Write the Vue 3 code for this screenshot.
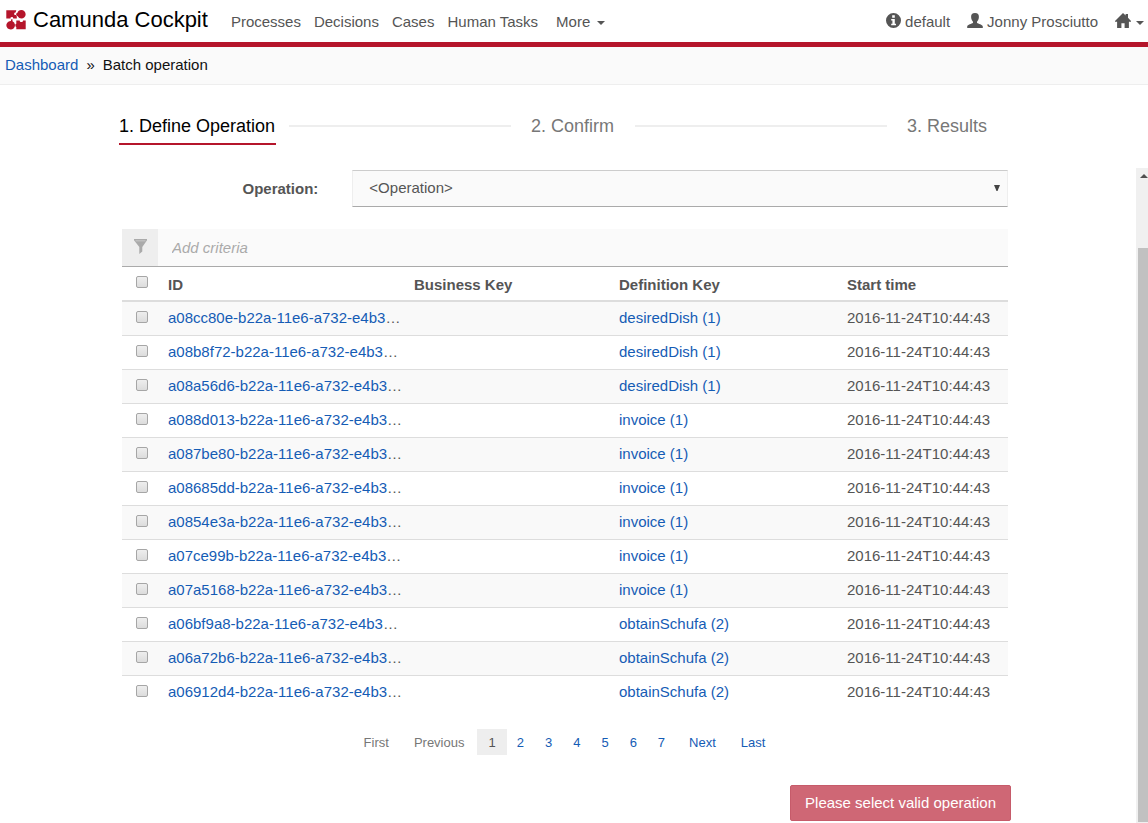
<script setup>
import { ref } from 'vue'

const navLinks = ['Processes', 'Decisions', 'Cases', 'Human Tasks']
const operation = ref('')
const criteria = ref('')
const selected = ref([])
const startTime = '2016-11-24T10:44:43'
const instances = [
  ['a08cc80e-b22a-11e6-a732-e4b3', 'desiredDish (1)'],
  ['a08b8f72-b22a-11e6-a732-e4b3', 'desiredDish (1)'],
  ['a08a56d6-b22a-11e6-a732-e4b3', 'desiredDish (1)'],
  ['a088d013-b22a-11e6-a732-e4b3', 'invoice (1)'],
  ['a087be80-b22a-11e6-a732-e4b3', 'invoice (1)'],
  ['a08685dd-b22a-11e6-a732-e4b3', 'invoice (1)'],
  ['a0854e3a-b22a-11e6-a732-e4b3', 'invoice (1)'],
  ['a07ce99b-b22a-11e6-a732-e4b3', 'invoice (1)'],
  ['a07a5168-b22a-11e6-a732-e4b3', 'invoice (1)'],
  ['a06bf9a8-b22a-11e6-a732-e4b3', 'obtainSchufa (2)'],
  ['a06a72b6-b22a-11e6-a732-e4b3', 'obtainSchufa (2)'],
  ['a06912d4-b22a-11e6-a732-e4b3', 'obtainSchufa (2)'],
].map(([id, definition]) => ({ id, definition }))

function toggleAll(event) {
  selected.value = event.target.checked ? instances.map((i) => i.id) : []
}
</script>

<template>
  <div class="page">
    <header class="topbar">
      <a class="brand" href="#">
        <svg class="logo" viewBox="0 0 20 20" aria-hidden="true">
          <path d="M.3 .3H10.300L9.600 2.600C8.600 2.600 8 3.200 8.200 4.200C8.400 5 9.200 5.300 10 5L10.800 6.500V8.500H7.200C7.400 7.400 6.700 6.800 5.700 6.900C4.700 7 4.200 7.700 4.600 8.600H.3Z" />
          <path d="M15.400 0A4.250 4.250 0 0 1 15.400 8.500A4.250 4.250 0 0 1 11.700 6.200L10.200 5.200V3.400L11.300 3A4.250 4.250 0 0 1 15.400 0Z" />
          <path d="M4.900 10.900L5.200 9.200H6.500V11.300A4.300 4.300 0 1 1 4.900 10.900Z" />
          <path d="M10.300 10.500H13.700C13.700 11.600 14.400 12.100 15.400 12.100C16.400 12.100 17 11.600 17 10.500H19.700V19.300H10.300V17L9.400 16.300V14.200L10.300 13.800Z" />
        </svg>
        <span>Camunda Cockpit</span>
      </a>
      <nav class="nav">
        <a v-for="link in navLinks" :key="link" href="#">{{ link }}</a>
        <button type="button" class="more">More <i class="caret"></i></button>
      </nav>
      <div class="account">
        <a href="#">
          <svg class="icon" viewBox="0 0 15 15" aria-hidden="true">
            <path fill-rule="evenodd" d="M7.500 0A7.500 7.500 0 1 0 7.500 15A7.500 7.500 0 0 0 7.500 0ZM6.200 2.300H8.800V4.700H6.200ZM5.200 6H8.800V10.800H10V12.300H5.200V10.800H6.400V7.500H5.200Z" />
          </svg>default
        </a>
        <a href="#">
          <svg class="icon user" viewBox="0 0 16 15" aria-hidden="true">
            <path d="M8 0C10.800 0 12 1.600 11.900 4C11.800 6.500 10.700 7.700 10 8.700V9.800C11.200 11 15.500 11.400 15.800 13.600V15H.2V13.600C.5 11.400 4.800 11 6 9.800V8.700C5.300 7.700 4.200 6.500 4.100 4C4 1.600 5.200 0 8 0Z" />
          </svg>Jonny Prosciutto
        </a>
        <button type="button" class="home" aria-label="Apps">
          <svg class="icon user" viewBox="0 0 16 15" aria-hidden="true">
            <path d="M8 0L10.600 2.500V1H13V4.800L16 8V8.800H13.900V15H9.600V10.200H6.400V15H2.100V8.800H0V8Z" />
          </svg>
          <i class="caret"></i>
        </button>
      </div>
    </header>

    <nav class="crumbs" aria-label="Breadcrumb">
      <a href="#">Dashboard</a><span>»</span><span>Batch operation</span>
    </nav>

    <ol class="steps">
      <li class="step active">1. Define Operation</li>
      <li class="rule first" aria-hidden="true"></li>
      <li class="step">2. Confirm</li>
      <li class="rule second" aria-hidden="true"></li>
      <li class="step">3. Results</li>
    </ol>

    <div class="body">
      <main class="content">
        <div class="operation">
          <label for="operation">Operation:</label>
          <div class="select">
            <select id="operation" v-model="operation">
              <option value="">&lt;Operation&gt;</option>
            </select>
            <svg class="arrow" viewBox="0 0 6 6" aria-hidden="true"><path d="M0 0H6L3.500 6H2.500Z" /></svg>
          </div>
        </div>

        <div class="search">
          <span class="funnel">
            <svg viewBox="0 0 13 15" aria-hidden="true"><path d="M0 0H13V1.200L8.300 8V12.500L5.300 15V8L0 1.200Z" /><path class="slot" d="M1.500 1.600H11.500V2.200H1.500Z" /></svg>
          </span>
          <input v-model="criteria" type="text" placeholder="Add criteria" aria-label="Add criteria" />
        </div>

        <table>
          <colgroup><col class="c-check" /><col class="c-id" /><col class="c-key" /><col class="c-def" /><col /></colgroup>
          <thead>
            <tr>
              <th class="tick"><input type="checkbox" aria-label="Select all" @change="toggleAll" /></th>
              <th>ID</th>
              <th>Business Key</th>
              <th>Definition Key</th>
              <th>Start time</th>
            </tr>
          </thead>
          <tbody>
            <tr v-for="item in instances" :key="item.id">
              <td class="tick"><input v-model="selected" type="checkbox" :value="item.id" :aria-label="item.id" /></td>
              <td><a href="#">{{ item.id }}</a>…</td>
              <td></td>
              <td><a href="#">{{ item.definition }}</a></td>
              <td>{{ startTime }}</td>
            </tr>
          </tbody>
        </table>

        <nav class="pager" aria-label="Pages">
          <button type="button" class="word" disabled>First</button>
          <button type="button" class="word" disabled>Previous</button>
          <button v-for="n in 7" :key="n" type="button" :class="{ current: n === 1 }">{{ n }}</button>
          <button type="button" class="word">Next</button>
          <button type="button" class="word">Last</button>
        </nav>

        <div class="actions">
          <button type="button" class="submit" disabled>Please select valid operation</button>
        </div>
      </main>

      <div class="scrollbar" aria-hidden="true">
        <svg viewBox="0 0 8 4"><path d="M4 0L8 4H0Z" /></svg>
        <div class="thumb"></div>
      </div>
    </div>
  </div>
</template>

<style>
body {
  margin: 0;
  background: #fff;
}
</style>

<style scoped>
* {
  box-sizing: border-box;
}
.page {
  display: flex;
  flex-direction: column;
  min-height: 100vh;
  font: 15px/20px "Liberation Sans", Arial, sans-serif;
  color: #555;
}
a {
  color: #155cb5;
  text-decoration: none;
}
button {
  font: inherit;
  color: inherit;
  background: none;
  border: 0;
  padding: 0;
  margin: 0;
}
.topbar {
  display: flex;
  align-items: center;
  height: 47px;
  padding: 2px 4px 0 6px;
  border-bottom: 5px solid #b5152b;
}
.brand {
  display: flex;
  align-items: center;
  gap: 7px;
  margin-right: 23px;
  padding-bottom: 4px;
  font-size: 22px;
  line-height: 26px;
  color: #000;
}
.logo {
  width: 20px;
  height: 20px;
  fill: #b5152b;
}
.nav {
  display: flex;
  gap: 13px;
}
.nav a,
.account a {
  color: #555;
}
.more {
  display: flex;
  align-items: center;
  gap: 7px;
  margin-left: 5px;
}
.caret {
  width: 0;
  height: 0;
  margin-top: 2px;
  border: 4px solid transparent;
  border-top-color: #555;
  border-bottom: 0;
}
.account {
  display: flex;
  gap: 17px;
  margin-left: auto;
}
.account a,
.home {
  display: flex;
  align-items: center;
  gap: 4px;
}
.home {
  gap: 5px;
}
.icon {
  width: 15px;
  height: 15px;
  margin-bottom: 3px;
  fill: #555;
}
.icon.user {
  width: 16px;
}
.crumbs {
  display: flex;
  gap: 8px;
  height: 38px;
  padding: 8px 5px;
  background: #fafafa;
  border-bottom: 1px solid #eee;
  color: #111;
}
.steps {
  display: flex;
  align-items: flex-start;
  list-style: none;
  margin: 30px 160px 23px 119px;
  padding: 0;
  font-size: 18px;
  line-height: 22px;
  color: #777;
}
.step {
  padding: 0 1px 6px 0;
  white-space: nowrap;
}
.step.active {
  color: #000;
  border-bottom: 2px solid #b5152b;
}
.rule {
  height: 2px;
  margin: 10px 20px 0;
  background: #eee;
}
.rule.first {
  flex: 221;
  margin-left: 13px;
}
.rule.second {
  flex: 251;
}
.body {
  display: flex;
  flex: 1;
}
.content {
  flex: 1;
  padding: 2px 128px 2px 122px;
}
.operation {
  display: grid;
  grid-template-columns: 26% 74%;
  align-items: center;
}
.operation label {
  padding-right: 34px;
  text-align: right;
  font-weight: bold;
}
.select {
  position: relative;
}
select {
  display: block;
  width: 100%;
  height: 37px;
  padding: 0 16px 2px;
  appearance: none;
  font: inherit;
  color: #555;
  background: #fafafa;
  border: 1px solid #eee;
  border-top-color: #ccc;
  border-bottom-color: #aaa;
  border-radius: 0;
}
.arrow {
  position: absolute;
  right: 8px;
  top: 15px;
  width: 6px;
  height: 6px;
  fill: #444;
  pointer-events: none;
}
.search {
  display: flex;
  height: 38px;
  margin-top: 22px;
  background: #fafafa;
  border-bottom: 1px solid #aaa;
}
.funnel {
  display: flex;
  justify-content: center;
  align-items: center;
  width: 36px;
  padding-bottom: 2px;
  background: #eee;
}
.funnel svg {
  width: 13px;
  height: 15px;
  fill: #aaa;
}
.funnel .slot {
  fill: #ddd;
}
.search input {
  flex: 1;
  padding: 0 14px;
  font: inherit;
  color: #555;
  background: none;
  border: 0;
}
.search input::placeholder {
  font-style: italic;
  color: #aaa;
}
table {
  width: 100%;
  table-layout: fixed;
  border-spacing: 0;
}
.c-check {
  width: 38px;
}
.c-id {
  width: 246px;
}
.c-key {
  width: 205px;
}
.c-def {
  width: 228px;
}
th,
td {
  height: 34px;
  padding: 0 8px 2px;
  text-align: left;
  white-space: nowrap;
}
th {
  height: 35px;
  padding: 2px 8px 0;
  border-bottom: 2px solid #ddd;
}
td {
  border-top: 1px solid #ddd;
}
tbody tr:first-child td {
  height: 33px;
  border-top: 0;
}
tbody tr:nth-child(odd) {
  background: #f9f9f9;
}
.tick {
  padding: 0 0 3px 14px;
}
.tick input {
  display: block;
  appearance: none;
  width: 12px;
  height: 12px;
  margin: 0;
  border: 1px solid #a6a6a6;
  border-radius: 2px;
  background: linear-gradient(#eee, #dcdcdc);
}
.tick input:checked {
  background: #155cb5;
}
.pager {
  display: flex;
  justify-content: center;
  margin-top: 20px;
  font-size: 13px;
  line-height: 18px;
  color: #155cb5;
}
.pager button {
  height: 26px;
  padding: 1px 11px 0;
  margin-left: -1px;
}
.pager button.word {
  padding: 1px 13px 0;
}
.pager button.current,
.pager button.current + button {
  margin-left: 0;
}
.pager button:not(.word) + .word {
  margin-left: 0;
}
.pager button:disabled {
  color: #777;
}
.pager button.current {
  color: #555;
  background: #eee;
}
.pager button.current + button {
  margin-left: -1px;
}
.actions {
  display: flex;
  justify-content: flex-end;
  margin: 30px -3px 0 0;
}
.submit {
  height: 36px;
  padding: 0 14px;
  color: #fff;
  background: #cf6775;
  border: 1px solid #c65b6a;
  border-radius: 2px;
}
.scrollbar {
  display: flex;
  flex-direction: column;
  width: 12px;
  padding: 6px 0 1px 2px;
  background: #f0f0f0;
}
.scrollbar svg {
  width: 8px;
  height: 4px;
  margin-left: 2px;
  fill: #505050;
}
.thumb {
  flex: 1;
  margin-top: 70px;
  background: #c1c1c1;
}
</style>
